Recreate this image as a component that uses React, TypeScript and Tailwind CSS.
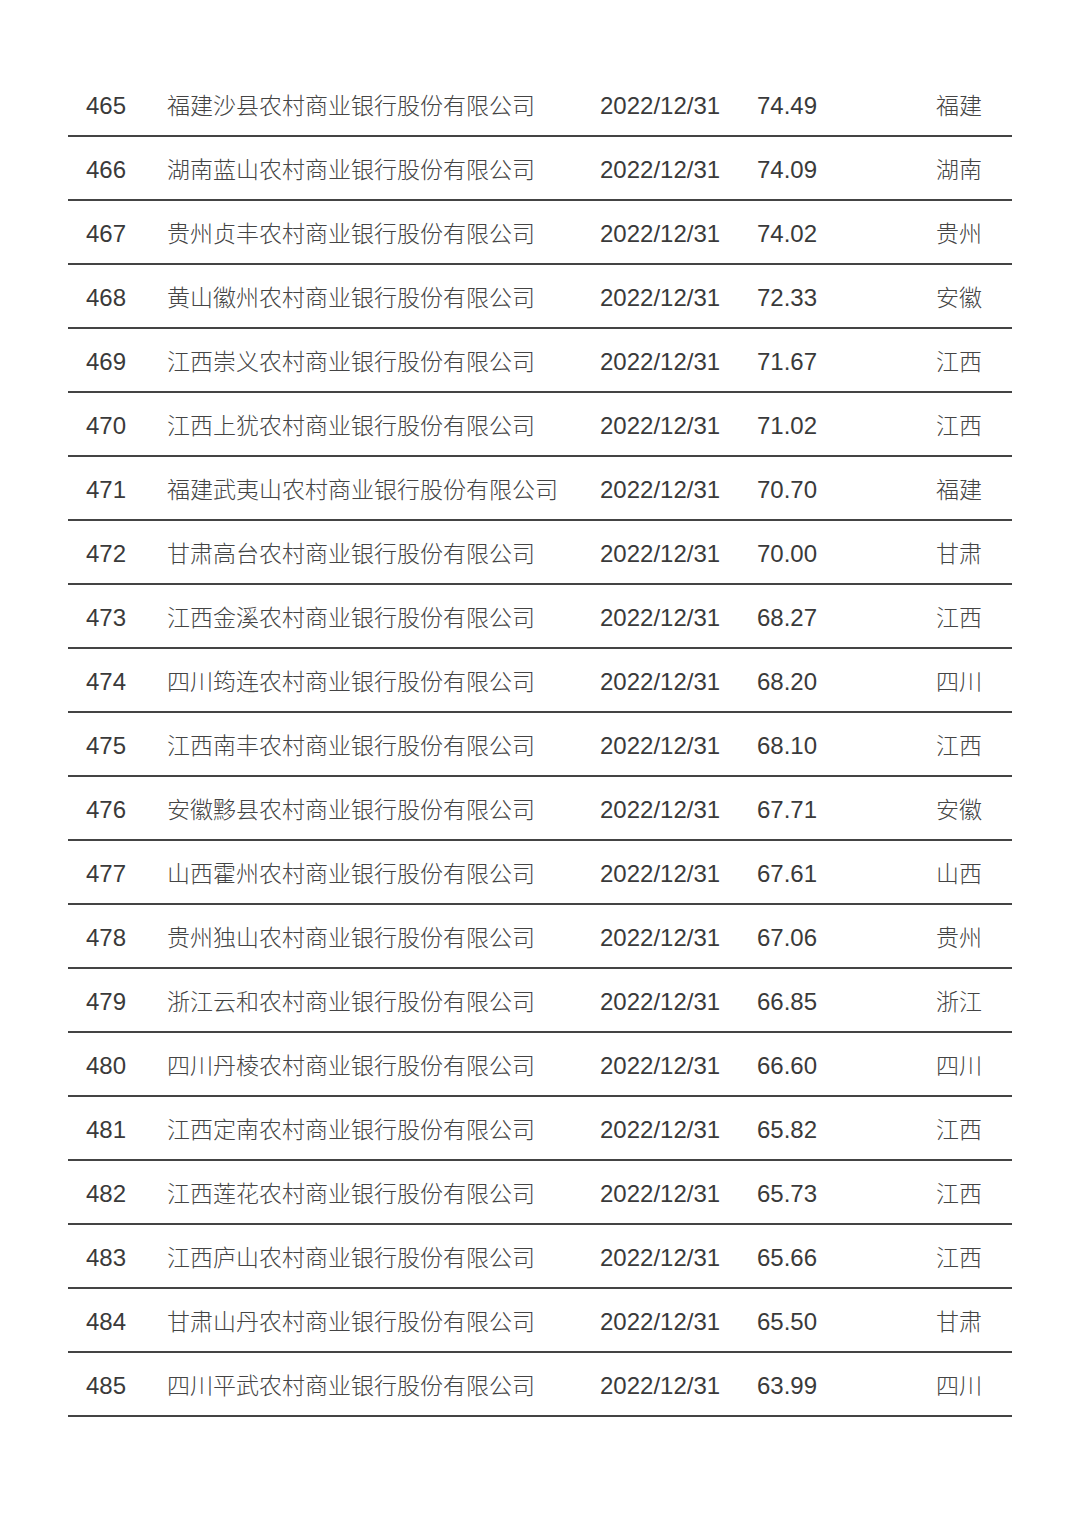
const rows: [number, string, string, string][] = [
  [465, "福建沙县农村商业银行股份有限公司", "74.49", "福建"],
  [466, "湖南蓝山农村商业银行股份有限公司", "74.09", "湖南"],
  [467, "贵州贞丰农村商业银行股份有限公司", "74.02", "贵州"],
  [468, "黄山徽州农村商业银行股份有限公司", "72.33", "安徽"],
  [469, "江西崇义农村商业银行股份有限公司", "71.67", "江西"],
  [470, "江西上犹农村商业银行股份有限公司", "71.02", "江西"],
  [471, "福建武夷山农村商业银行股份有限公司", "70.70", "福建"],
  [472, "甘肃高台农村商业银行股份有限公司", "70.00", "甘肃"],
  [473, "江西金溪农村商业银行股份有限公司", "68.27", "江西"],
  [474, "四川筠连农村商业银行股份有限公司", "68.20", "四川"],
  [475, "江西南丰农村商业银行股份有限公司", "68.10", "江西"],
  [476, "安徽黟县农村商业银行股份有限公司", "67.71", "安徽"],
  [477, "山西霍州农村商业银行股份有限公司", "67.61", "山西"],
  [478, "贵州独山农村商业银行股份有限公司", "67.06", "贵州"],
  [479, "浙江云和农村商业银行股份有限公司", "66.85", "浙江"],
  [480, "四川丹棱农村商业银行股份有限公司", "66.60", "四川"],
  [481, "江西定南农村商业银行股份有限公司", "65.82", "江西"],
  [482, "江西莲花农村商业银行股份有限公司", "65.73", "江西"],
  [483, "江西庐山农村商业银行股份有限公司", "65.66", "江西"],
  [484, "甘肃山丹农村商业银行股份有限公司", "65.50", "甘肃"],
  [485, "四川平武农村商业银行股份有限公司", "63.99", "四川"],
];

const num = "pt-[4px] font-['Liberation_Sans',sans-serif] text-[24px] text-[#3a3a3a]";
const cjk = "font-['Noto_Sans_CJK_SC',sans-serif] font-light text-[23px] text-[#444]";

export default function App() {
  return (
    <div className="w-[1080px] h-[1528px] bg-white pt-[73px]">
      <div className="ml-[68px] w-[944px]">
        {rows.map(([rank, name, value, prov]) => (
          <div
            key={rank}
            className="flex items-center h-[64px] border-b-2 border-[#444] pl-[18px]"
          >
            <span className={`w-[81px] ${num}`}>{rank}</span>
            <span className={`w-[433px] whitespace-nowrap ${cjk}`}>{name}</span>
            <span className={`w-[157px] ${num}`}>2022/12/31</span>
            <span className={`w-[179px] ${num}`}>{value}</span>
            <span className={cjk}>{prov}</span>
          </div>
        ))}
      </div>
    </div>
  );
}
